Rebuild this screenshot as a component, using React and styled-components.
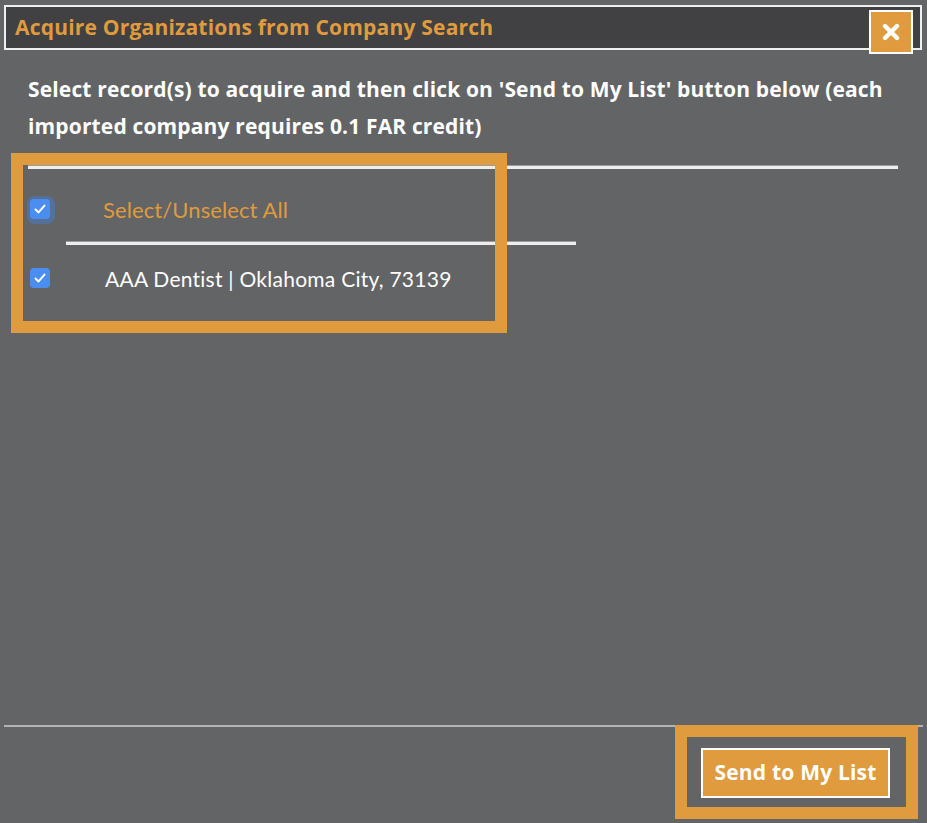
import React, { useState } from "react";
import styled, { createGlobalStyle } from "styled-components";

const GlobalStyle = createGlobalStyle`
  html, body {
    margin: 0;
    padding: 0;
    background: #636466;
  }
  * { box-sizing: border-box; }
`;

const ORANGE = "#df9b3d";
const BOLD_FONT = `"Open Sans", Lato, sans-serif`;

export default function App() {
  const [items, setItems] = useState([
    { id: 1, label: "AAA Dentist | Oklahoma City, 73139", checked: true },
  ]);
  const allChecked = items.every((i) => i.checked);
  const toggleAll = () =>
    setItems(items.map((i) => ({ ...i, checked: !allChecked })));
  const toggle = (id) =>
    setItems(items.map((i) => (i.id === id ? { ...i, checked: !i.checked } : i)));

  return (
    <>
      <GlobalStyle />
      <Page>
        <Header>
          <Title>Acquire Organizations from Company Search</Title>
          <CloseButton aria-label="close">
            <svg width="18" height="18" viewBox="0 0 18 18">
              <path
                d="M3 3 L15 15 M15 3 L3 15"
                stroke="#fff"
                strokeWidth="4.4"
                strokeLinecap="round"
              />
            </svg>
          </CloseButton>
        </Header>

        <Intro>
          Select record(s) to acquire and then click on 'Send to My List' button
          below (each imported company requires 0.1 FAR credit)
        </Intro>

        <ListArea>
          <Rule />
          <SelectAllRow>
            <Check checked={allChecked} focused onClick={toggleAll} />
            <SelectAllLabel>Select/Unselect All</SelectAllLabel>
          </SelectAllRow>
          <SubList>
            <Rule />
          </SubList>
          {items.map((item) => (
            <ItemRow key={item.id}>
              <Check checked={item.checked} onClick={() => toggle(item.id)} />
              <ItemLabel>{item.label}</ItemLabel>
            </ItemRow>
          ))}
          <Highlight $top={-12} $left={-17} $width={496} $height={180} />
        </ListArea>

        <Spacer />

        <Footer>
          <SendButton>Send to My List</SendButton>
          <Highlight $top={-2} $left={671} $width={243} $height={94} />
        </Footer>
      </Page>
    </>
  );
}

function Check({ checked, focused, onClick }) {
  return (
    <CheckBox $checked={checked} $focused={focused} onClick={onClick}>
      {checked && (
        <svg width="14" height="14" viewBox="0 0 14 14">
          <path
            d="M2.5 7.5 L5.6 10.4 L11.5 3.6"
            fill="none"
            stroke="#fff"
            strokeWidth="2"
            strokeLinecap="round"
            strokeLinejoin="round"
          />
        </svg>
      )}
    </CheckBox>
  );
}

const Page = styled.div`
  position: relative;
  display: flex;
  flex-direction: column;
  min-height: 100vh;
  font-family: Lato, "Open Sans", sans-serif;
`;

const Header = styled.div`
  position: relative;
  margin: 5px 5px 0 4px;
  height: 45px;
  background: #414143;
  border: 2px solid #efefef;
  display: flex;
  align-items: center;
  padding-left: 9px;
`;

const Title = styled.h1`
  margin: 0 0 2px;
  color: ${ORANGE};
  font-family: ${BOLD_FONT};
  font-size: 21px;
  font-weight: 700;
  letter-spacing: 0.2px;
`;

const CloseButton = styled.button`
  position: absolute;
  right: 7px;
  top: 3px;
  width: 44px;
  height: 44px;
  background: ${ORANGE};
  border: 2px solid #fff;
  display: flex;
  align-items: center;
  justify-content: center;
  padding: 0;
  cursor: pointer;
`;

const Intro = styled.p`
  margin: 21px 40px 0 28px;
  color: #fff;
  font-family: ${BOLD_FONT};
  font-size: 21px;
  font-weight: 700;
  line-height: 37px;
  letter-spacing: 0.15px;
`;

const ListArea = styled.div`
  position: relative;
  margin: 20px 29px 0 28px;
`;

const Rule = styled.div`
  height: 4px;
  border-top: 1px solid #9c9c9c;
  background: #eeeeee;
`;

const SubList = styled.div`
  margin-left: 38px;
  width: 510px;
`;

const SelectAllRow = styled.div`
  display: flex;
  align-items: center;
  height: 72px;
  padding-top: 8px;
`;

const ItemRow = styled.div`
  display: flex;
  align-items: center;
  height: 66px;
`;

const CheckBox = styled.span`
  width: 20px;
  height: 20px;
  margin-left: 2px;
  border-radius: 4px;
  background: ${(p) => (p.$checked ? "#4a8ef2" : "#fff")};
  display: inline-flex;
  align-items: center;
  justify-content: center;
  cursor: pointer;
  box-shadow: ${(p) =>
    p.$focused ? "1px 1px 0 4px rgba(72, 128, 214, 0.45)" : "none"};
`;

const SelectAllLabel = styled.span`
  margin-left: 53px;
  color: ${ORANGE};
  font-size: 22px;
  font-weight: 400;
  letter-spacing: 0.1px;
`;

const ItemLabel = styled.span`
  margin-left: 55px;
  color: #fff;
  font-size: 21px;
  font-weight: 400;
  letter-spacing: 0.25px;
`;

const Spacer = styled.div`
  flex: 1;
`;

const Footer = styled.div`
  position: relative;
  height: 98px;
  margin: 0 4px 0 4px;
  border-top: 2px solid #b3b3b3;
  display: flex;
  justify-content: flex-end;
  padding: 21px 33px 0 0;
`;

const SendButton = styled.button`
  height: 50px;
  width: 189px;
  background: ${ORANGE};
  border: 2px solid #fff;
  color: #fff;
  font-family: ${BOLD_FONT};
  font-size: 21px;
  font-weight: 700;
  letter-spacing: 0.2px;
  padding: 0 0 3px;
  cursor: pointer;
`;

const Highlight = styled.div`
  position: absolute;
  top: ${(p) => p.$top}px;
  left: ${(p) => p.$left}px;
  width: ${(p) => p.$width}px;
  height: ${(p) => p.$height}px;
  border: 12px solid ${ORANGE};
  pointer-events: none;
`;
